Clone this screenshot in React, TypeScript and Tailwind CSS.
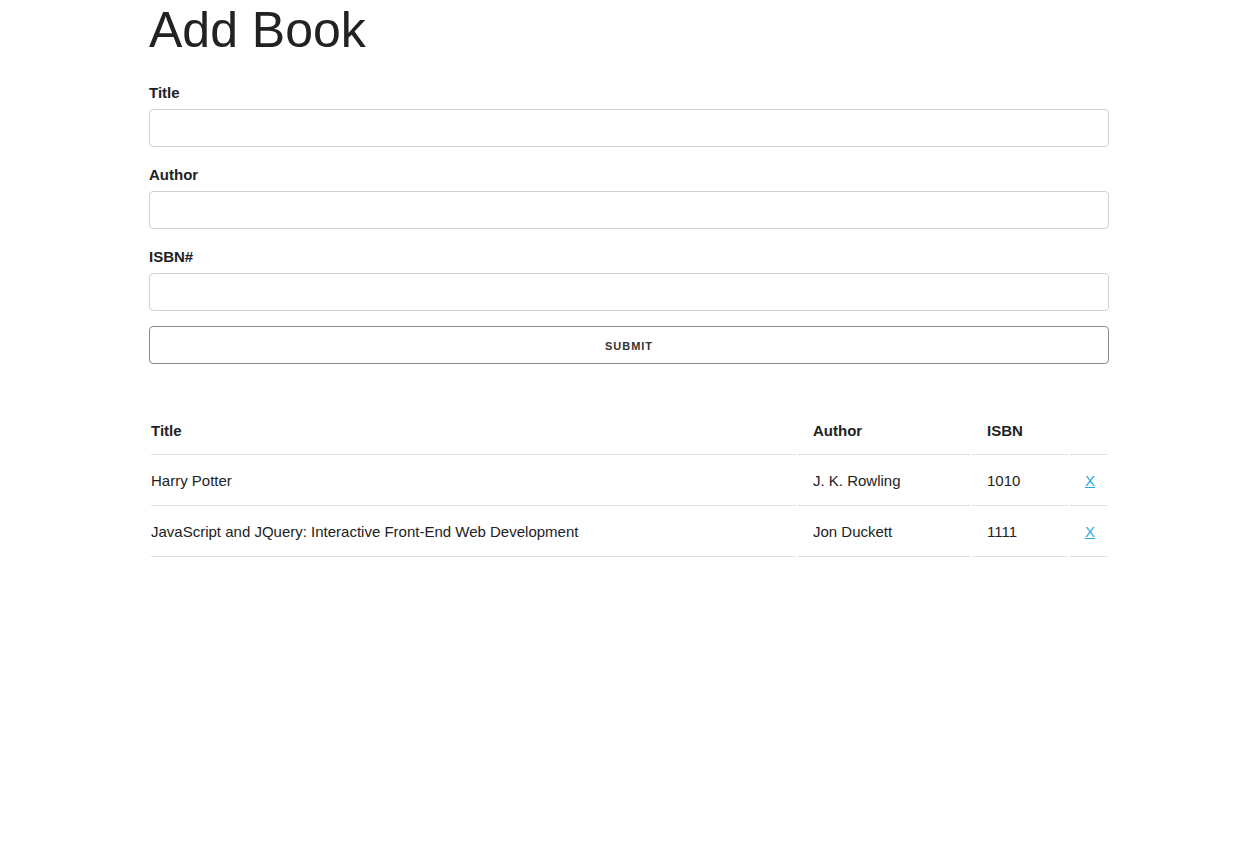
import React from "react";

const books = [
  { title: "Harry Potter", author: "J. K. Rowling", isbn: "1010" },
  {
    title: "JavaScript and JQuery: Interactive Front-End Web Development",
    author: "Jon Duckett",
    isbn: "1111",
  },
];

function Field({ label }: { label: string }) {
  return (
    <div>
      <label className="block pt-px mb-[4px] font-bold leading-[24px]">{label}</label>
      <input
        type="text"
        className="block w-full h-[38px] px-[10px] py-[6px] mb-[15px] bg-white border border-[#D1D1D1] rounded-[4px] outline-none"
      />
    </div>
  );
}

export default function App() {
  return (
    <div className="min-h-screen bg-white text-[#222] text-[15px] leading-[1.6] font-['Liberation_Sans',Arial,sans-serif]">
      <div className="mx-auto w-[962px] pr-[2px]">
        <h1 className="text-[50px] leading-[1.2] font-light mb-5">Add Book</h1>
        <form onSubmit={(e) => e.preventDefault()}>
          <Field label="Title" />
          <Field label="Author" />
          <Field label="ISBN#" />
          <button
            type="submit"
            className="block w-full h-[38px] px-[30px] border border-[#8a8a8a] rounded-[4px] bg-transparent text-[#333] text-[11px] font-bold tracking-[1px] uppercase leading-[38px] text-center"
          >
            Submit
          </button>
        </form>
        <table className="mt-[40px] w-full table-fixed border-separate border-spacing-[2px]">
          <thead>
            <tr>
              <th className="w-[645px] text-left font-bold pt-[13px] pb-[11px] pl-0 pr-[15px] border-b border-[#E1E1E1]">Title</th>
              <th className="w-[172px] text-left font-bold pt-[13px] pb-[11px] px-[15px] border-b border-[#E1E1E1]">Author</th>
              <th className="w-[96px] text-left font-bold pt-[13px] pb-[11px] px-[15px] border-b border-[#E1E1E1]">ISBN</th>
              <th className="w-[37px] text-left font-bold pt-[13px] pb-[11px] pl-[15px] pr-0 border-b border-[#E1E1E1]"></th>
            </tr>
          </thead>
          <tbody>
            {books.map((b) => (
              <tr key={b.isbn}>
                <td className="py-3 pl-0 pr-[15px] border-b border-[#E1E1E1] whitespace-nowrap">{b.title}</td>
                <td className="py-3 px-[15px] border-b border-[#E1E1E1] whitespace-nowrap">{b.author}</td>
                <td className="py-3 px-[15px] border-b border-[#E1E1E1]">{b.isbn}</td>
                <td className="py-3 pl-[15px] pr-0 border-b border-[#E1E1E1]">
                  <a href="#" className="text-[#1EAEDB] underline">X</a>
                </td>
              </tr>
            ))}
          </tbody>
        </table>
      </div>
    </div>
  );
}
